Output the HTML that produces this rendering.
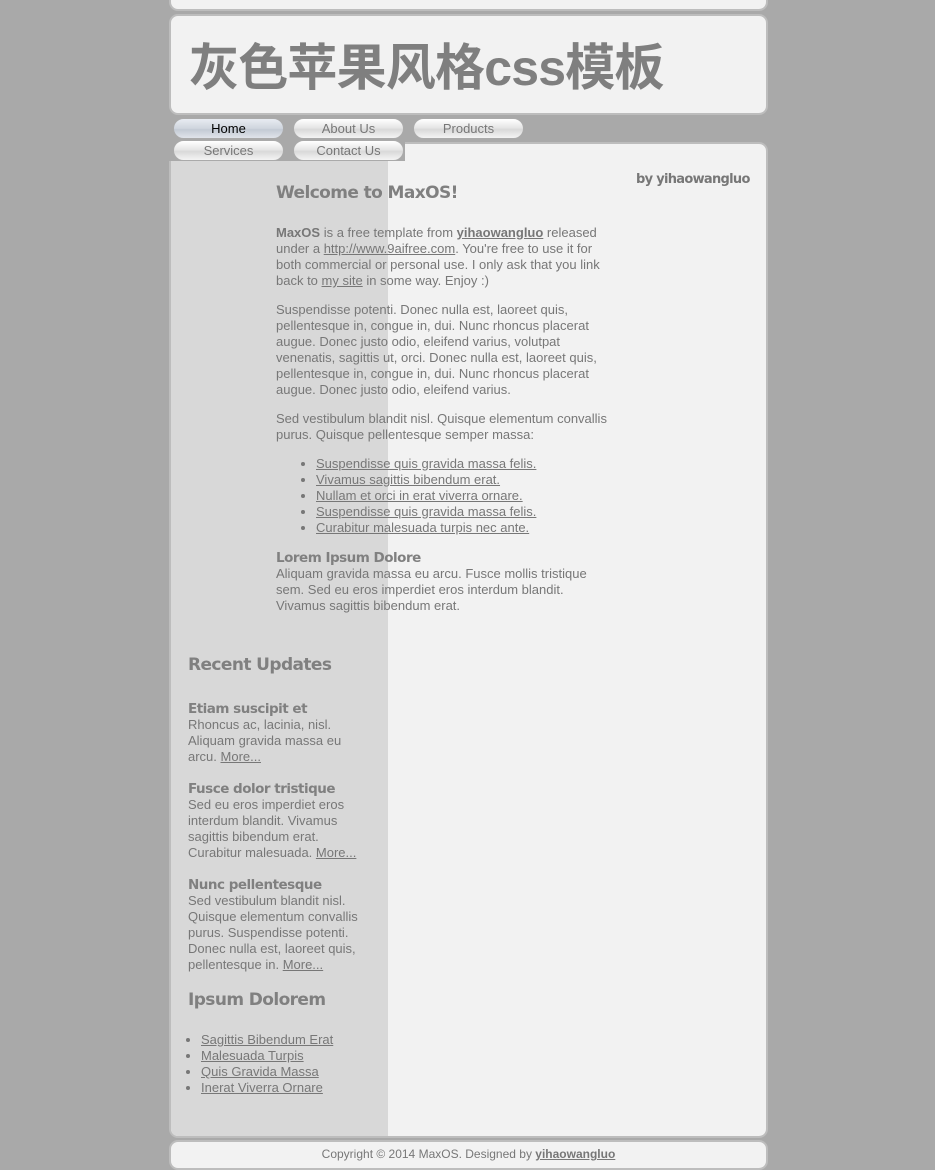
<!DOCTYPE html>
<html><head><meta charset="utf-8"><style>
*{margin:0;padding:0;box-sizing:border-box}
body{width:935px;height:1162px;overflow:hidden;background:#a9a9a9;font-family:"Liberation Sans",Arial,sans-serif;font-size:13px;color:#777;position:relative}
a{color:#777}
.box{position:absolute;left:169px;width:599px;background:#f2f2f2;border:2px solid #bdbdbd;border-radius:9px}
.tab{position:absolute;height:21px;width:111px;border:1px solid #aaa;border-radius:11px;background:linear-gradient(#fff,#e6e6e6 45%,#d9d9d9 55%,#f4f4f4);text-align:center;font-size:13px;line-height:19px;color:#777}
h2{font-family:"DejaVu Sans","Liberation Sans",sans-serif;font-weight:bold;font-size:17px;color:#808080;letter-spacing:-0.6px}
h3{font-family:"DejaVu Sans","Liberation Sans",sans-serif;font-weight:bold;font-size:13.5px;color:#808080;letter-spacing:-0.5px}
p{line-height:16px}
.abs{position:absolute}
ul{line-height:16px}
</style></head><body>
<div class="box" style="top:-10px;height:21px"></div>
<div class="box" style="top:14px;height:101px"></div>
<div class="abs" style="left:189px;top:36px;font-family:'Liberation Sans','Noto Sans CJK SC',sans-serif;font-weight:bold;font-size:50px;line-height:64px;color:#7f7f7f;letter-spacing:-0.8px;white-space:nowrap">灰色苹果风格css模板</div>
<div class="box" style="top:142px;height:996px;overflow:hidden"><div style="position:absolute;left:0;top:0;width:217px;height:100%;background:#d8d8d8"></div></div>
<div class="box" style="top:1140px;height:30px"></div>
<div class="abs" style="left:169px;top:139px;width:236px;height:22px;background:#a9a9a9"></div>
<div class="tab" style="left:173px;top:118px;background:linear-gradient(#e8ecf2,#cfd5de 50%,#c3cad4 55%,#e0e4ea);color:#000">Home</div>
<div class="tab" style="left:293px;top:118px">About Us</div>
<div class="tab" style="left:413px;top:118px">Products</div>
<div class="tab" style="left:173px;top:140px">Services</div>
<div class="tab" style="left:293px;top:140px">Contact Us</div>

<div class="abs" style="left:636px;top:172px;font-family:'DejaVu Sans',sans-serif;font-weight:bold;font-size:13px;color:#777;letter-spacing:-0.7px">by yihaowangluo</div>

<div class="abs" style="left:276px;top:183px;width:335px">
<h2>Welcome to MaxOS!</h2>
<p style="margin-top:22px"><b>MaxOS</b> is a free template from <a href="#"><b>yihaowangluo</b></a> released under a <a href="#">http://www.9aifree.com</a>. You're free to use it for both commercial or personal use. I only ask that you link back to <a href="#">my site</a> in some way. Enjoy :)</p>
<p style="margin-top:13px">Suspendisse potenti. Donec nulla est, laoreet quis, pellentesque in, congue in, dui. Nunc rhoncus placerat augue. Donec justo odio, eleifend varius, volutpat venenatis, sagittis ut, orci. Donec nulla est, laoreet quis, pellentesque in, congue in, dui. Nunc rhoncus placerat augue. Donec justo odio, eleifend varius.</p>
<p style="margin-top:13px">Sed vestibulum blandit nisl. Quisque elementum convallis purus. Quisque pellentesque semper massa:</p>
<ul style="margin:13px 0 0 40px">
<li><a href="#">Suspendisse quis gravida massa felis.</a></li>
<li><a href="#">Vivamus sagittis bibendum erat.</a></li>
<li><a href="#">Nullam et orci in erat viverra ornare.</a></li>
<li><a href="#">Suspendisse quis gravida massa felis.</a></li>
<li><a href="#">Curabitur malesuada turpis nec ante.</a></li>
</ul>
<h3 style="margin-top:14px">Lorem Ipsum Dolore</h3>
<p>Aliquam gravida massa eu arcu. Fusce mollis tristique sem. Sed eu eros imperdiet eros interdum blandit. Vivamus sagittis bibendum erat.</p>
</div>

<div class="abs" style="left:188px;top:655px;width:180px">
<h2>Recent Updates</h2>
<h3 style="margin-top:26px">Etiam suscipit et</h3>
<p>Rhoncus ac, lacinia, nisl. Aliquam gravida massa eu arcu. <a href="#">More...</a></p>
<h3 style="margin-top:16px">Fusce dolor tristique</h3>
<p>Sed eu eros imperdiet eros interdum blandit. Vivamus sagittis bibendum erat. Curabitur malesuada. <a href="#">More...</a></p>
<h3 style="margin-top:16px">Nunc pellentesque</h3>
<p>Sed vestibulum blandit nisl. Quisque elementum convallis purus. Suspendisse potenti. Donec nulla est, laoreet quis, pellentesque in. <a href="#">More...</a></p>
<h2 style="margin-top:17px">Ipsum Dolorem</h2>
<ul style="margin:22px 0 0 13px">
<li><a href="#">Sagittis Bibendum Erat</a></li>
<li><a href="#">Malesuada Turpis</a></li>
<li><a href="#">Quis Gravida Massa</a></li>
<li><a href="#">Inerat Viverra Ornare</a></li>
</ul>
</div>

<div class="abs" style="left:169px;top:1147px;width:599px;text-align:center;font-size:12px">Copyright © 2014 MaxOS. Designed by <a href="#"><b>yihaowangluo</b></a></div>
</body></html>
